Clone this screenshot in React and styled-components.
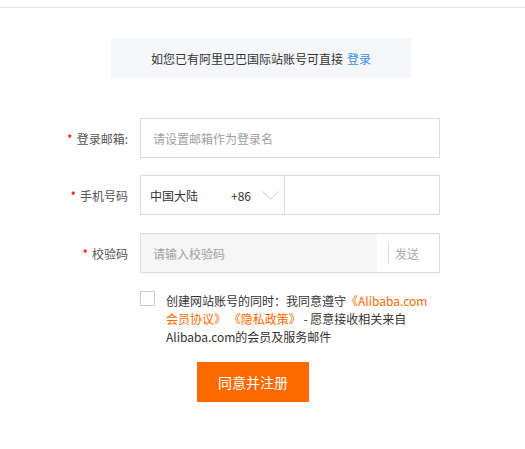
import React, { useState } from 'react'
import styled, { createGlobalStyle } from 'styled-components'

const GlobalStyle = createGlobalStyle`
  body {
    margin: 0;
    background: #fff;
    font-family: "Noto Sans CJK SC", "Noto Sans", "Liberation Sans", sans-serif;
    color: #333;
  }
`

const Page = styled.div`
  width: 525px;
  min-height: 449px;
  padding-top: 7px;
  box-sizing: border-box;
`
const TopLine = styled.div`
  height: 1px;
  background-color: #e6e6e6;
`
const Notice = styled.div`
  width: 300px;
  height: 40px;
  margin: 30px 0 0 111px;
  background-color: #f6f7fb;
  display: flex;
  align-items: center;
  justify-content: center;
  font-size: 12px;
  color: #333;
`
const LoginLink = styled.a`
  color: #3d8fe8;
  margin-left: 4px;
  text-decoration: none;
  cursor: pointer;
`
const Form = styled.div`
  margin-top: 40px;
  display: flex;
  flex-direction: column;
  gap: 17px;
`
const Row = styled.div`
  display: flex;
  align-items: center;
  margin-top: ${p => p.$extra || 0}px;
`
const Label = styled.label`
  width: 128px;
  margin-right: 12px;
  text-align: right;
  font-size: 12px;
  color: #555;
  white-space: nowrap;
`
const Star = styled.span`
  color: #e00;
  margin-right: 4px;
  font-size: 12px;
`
const Field = styled.div`
  width: 300px;
  height: 40px;
  box-sizing: border-box;
  border: 1px solid #dcdcdc;
  display: flex;
  align-items: stretch;
  background: #fff;
`
const Input = styled.input`
  flex: 1;
  min-width: 0;
  border: none;
  outline: none;
  padding: 0 12px;
  font-family: inherit;
  font-size: 12px;
  color: #333;
  background: ${p => (p.$grey ? '#f6f6f6' : 'transparent')};
  &::placeholder {
    color: #a0a0a0;
  }
`
const Country = styled.div`
  width: 144px;
  border-right: 1px solid #dcdcdc;
  display: flex;
  align-items: center;
  padding-left: 9px;
  font-size: 12px;
  color: #333;
  box-sizing: border-box;
`
const CountryName = styled.span`
  width: 81px;
`
const Chevron = styled.svg`
  margin-left: 11px;
`
const SendButton = styled.div`
  width: 62px;
  display: flex;
  align-items: center;
  font-size: 12px;
  color: #aaa;
  &::before {
    content: '';
    width: 1px;
    height: 20px;
    background: #dcdcdc;
    margin: 0 6px 0 11px;
  }
`
const AgreeRow = styled.div`
  display: flex;
  align-items: flex-start;
  margin: 18px 0 0 140px;
`
const CheckBox = styled.div`
  width: 15px;
  height: 15px;
  box-sizing: border-box;
  border: 1px solid #ccc;
  background: ${p => (p.$on ? '#ff6a00' : '#fff')};
  cursor: pointer;
  flex-shrink: 0;
`
const AgreeText = styled.div`
  margin-left: 11px;
  font-size: 12px;
  line-height: 18px;
  margin-top: 1px;
  color: #333;
`
const Orange = styled.span`
  color: #ff6a00;
`
const Submit = styled.button`
  width: 112px;
  height: 40px;
  margin: 16px 0 0 197px;
  border: none;
  background-color: #ff6a00;
  color: #fff;
  font-family: inherit;
  font-size: 14px;
  cursor: pointer;
`

const App = () => {
  const [agree, setAgree] = useState(false)

  return (
    <>
      <GlobalStyle />
      <Page>
        <TopLine />
        <Notice>
          如您已有阿里巴巴国际站账号可直接<LoginLink>登录</LoginLink>
        </Notice>
        <Form>
          <Row>
            <Label><Star>*</Star>登录邮箱:</Label>
            <Field>
              <Input placeholder="请设置邮箱作为登录名" />
            </Field>
          </Row>
          <Row>
            <Label><Star>*</Star>手机号码</Label>
            <Field>
              <Country>
                <CountryName>中国大陆</CountryName>
                <span>+86</span>
                <Chevron width="17" height="9" viewBox="0 0 17 9">
                  <path d="M0.5 0.5 L8.5 8 L16.5 0.5" fill="none" stroke="#c8c8c8" strokeWidth="1" />
                </Chevron>
              </Country>
              <Input />
            </Field>
          </Row>
          <Row $extra={1}>
            <Label><Star>*</Star>校验码</Label>
            <Field>
              <Input $grey placeholder="请输入校验码" />
              <SendButton>发送</SendButton>
            </Field>
          </Row>
        </Form>
        <AgreeRow>
          <CheckBox $on={agree} onClick={() => setAgree(!agree)} />
          <AgreeText>
            创建网站账号的同时：我同意遵守<Orange>《Alibaba.com</Orange><br />
            <Orange>会员协议》 《隐私政策》</Orange> - 愿意接收相关来自<br />
            Alibaba.com的会员及服务邮件
          </AgreeText>
        </AgreeRow>
        <Submit>同意并注册</Submit>
      </Page>
    </>
  )
}

export default App
